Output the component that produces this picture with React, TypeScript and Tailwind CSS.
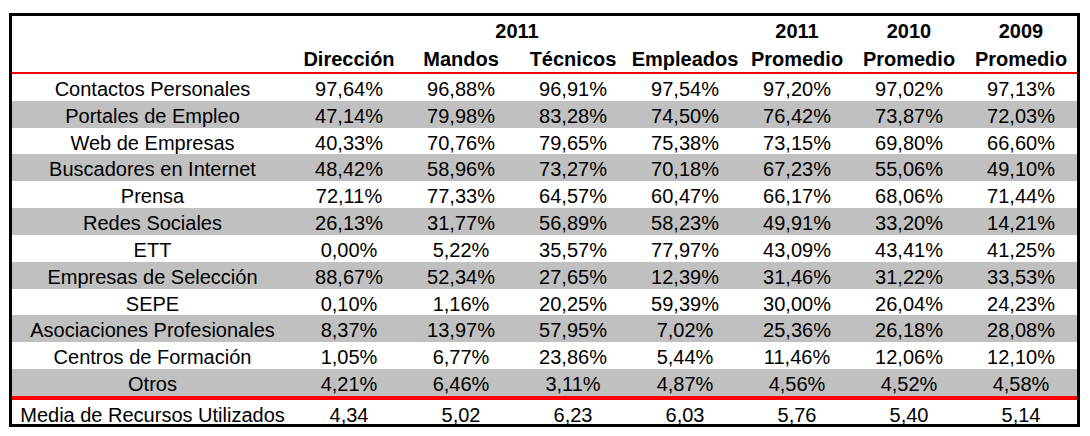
import React from 'react';

const rows: [string, string[]][] = [
  ['Contactos Personales', ['97,64%', '96,88%', '96,91%', '97,54%', '97,20%', '97,02%', '97,13%']],
  ['Portales de Empleo', ['47,14%', '79,98%', '83,28%', '74,50%', '76,42%', '73,87%', '72,03%']],
  ['Web de Empresas', ['40,33%', '70,76%', '79,65%', '75,38%', '73,15%', '69,80%', '66,60%']],
  ['Buscadores en Internet', ['48,42%', '58,96%', '73,27%', '70,18%', '67,23%', '55,06%', '49,10%']],
  ['Prensa', ['72,11%', '77,33%', '64,57%', '60,47%', '66,17%', '68,06%', '71,44%']],
  ['Redes Sociales', ['26,13%', '31,77%', '56,89%', '58,23%', '49,91%', '33,20%', '14,21%']],
  ['ETT', ['0,00%', '5,22%', '35,57%', '77,97%', '43,09%', '43,41%', '41,25%']],
  ['Empresas de Selección', ['88,67%', '52,34%', '27,65%', '12,39%', '31,46%', '31,22%', '33,53%']],
  ['SEPE', ['0,10%', '1,16%', '20,25%', '59,39%', '30,00%', '26,04%', '24,23%']],
  ['Asociaciones Profesionales', ['8,37%', '13,97%', '57,95%', '7,02%', '25,36%', '26,18%', '28,08%']],
  ['Centros de Formación', ['1,05%', '6,77%', '23,86%', '5,44%', '11,46%', '12,06%', '12,10%']],
  ['Otros', ['4,21%', '6,46%', '3,11%', '4,87%', '4,56%', '4,52%', '4,58%']],
];

const media = ['4,34', '5,02', '6,23', '6,03', '5,76', '5,40', '5,14'];

const grid = 'grid grid-cols-[281px_repeat(7,112px)]';

const App: React.FC = () => {
  return (
    <div className="w-[1090px] h-[436px] bg-white pt-[13px] pl-[9px] font-['Liberation_Sans',Arial,sans-serif] text-black">
      <div className="w-[1071px] border-[3px] border-black">
        {/* header */}
        <div className={`${grid} h-[28px] items-center text-[20px] font-bold text-center`}>
          <div />
          <div className="col-span-4">2011</div>
          <div>2011</div>
          <div>2010</div>
          <div>2009</div>
        </div>
        <div className={`${grid} h-[30px] items-center text-[20px] font-bold text-center border-b-2 border-[#ff0000]`}>
          <div />
          {['Dirección', 'Mandos', 'Técnicos', 'Empleados', 'Promedio', 'Promedio', 'Promedio'].map((h, i) => (
            <div key={i}>{h}</div>
          ))}
        </div>

        {rows.map(([label, vals], i) => (
          <div
            key={label}
            className={`${grid} h-[26.83px] items-center text-[20px] text-center ${i % 2 === 1 ? 'bg-[#c0c0c0]' : 'bg-white'}`}
          >
            <div className="whitespace-nowrap">{label}</div>
            {vals.map((v, j) => (
              <div key={j}>{v}</div>
            ))}
          </div>
        ))}

        <div className={`${grid} h-[28px] items-center text-[20px] text-center border-t-4 border-[#ff0000]`}>
          <div className="whitespace-nowrap">Media de Recursos Utilizados</div>
          {media.map((v, j) => (
            <div key={j}>{v}</div>
          ))}
        </div>
      </div>
    </div>
  );
};

export default App;
